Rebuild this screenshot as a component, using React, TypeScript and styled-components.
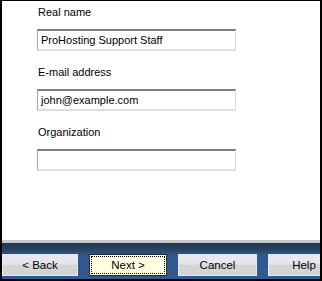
import styled, { createGlobalStyle } from "styled-components";

const fields = [
  { label: "Real name", value: "ProHosting Support Staff" },
  { label: "E-mail address", value: "john@example.com" },
  { label: "Organization", value: "" },
];

const buttons = [
  { label: "< Back", width: 76, focused: false },
  { label: "Next >", width: 78, focused: true },
  { label: "Cancel", width: 79, focused: false },
  { label: "Help", width: 72, focused: false },
];

function App() {
  return (
    <>
      <GlobalStyle />
      <Frame>
        <Content>
          {fields.map((f) => (
            <Field key={f.label}>
              <Label>{f.label}</Label>
              <TextBox>{f.value}</TextBox>
            </Field>
          ))}
        </Content>
        <Footer>
          <Band />
          <ButtonRow>
            {buttons.map((b) => (
              <Button key={b.label} focused={b.focused} w={b.width}>
                {b.focused ? <Focus>{b.label}</Focus> : b.label}
              </Button>
            ))}
          </ButtonRow>
        </Footer>
      </Frame>
    </>
  );
}

export default App;

const GlobalStyle = createGlobalStyle`
  body {
    margin: 0;
    background: #ffffff;
    font-family: "Liberation Sans", Arial, sans-serif;
  }
`;

const Frame = styled.div`
  width: 322px;
  height: 281px;
  box-sizing: border-box;
  border-style: solid;
  border-color: #000000;
  border-width: 1px 2px 2px 2px;
  display: flex;
  flex-direction: column;
  overflow: hidden;
`;

const Content = styled.div`
  flex: 1;
  background: #ffffff;
  padding: 4px 0 0 35px;
  display: flex;
  flex-direction: column;
  gap: 14px;
`;

const Field = styled.div`
  display: flex;
  flex-direction: column;
  gap: 9px;
`;

const Label = styled.div`
  font-size: 11px;
  line-height: 15px;
  color: #000000;
  padding-left: 1px;
`;

const TextBox = styled.div`
  width: 199px;
  height: 22px;
  box-sizing: border-box;
  border-style: solid;
  border-width: 2px 1px 2px 1px;
  border-color: #7d7d80 #dddde0 #dddde0 #a8a8ac;
  padding: 0 3px;
  font-size: 11px;
  line-height: 18px;
  color: #000000;
  background: #ffffff;
`;

const Footer = styled.div`
  height: 36px;
  border-top: 3px solid #c5c9cd;
  background: linear-gradient(#223549 0px, #2a4260 6px, #2e5486 11px, #2f5a90 100%);
  display: flex;
  flex-direction: column;
`;

const Band = styled.div`
  height: 11px;
`;

const ButtonRow = styled.div`
  display: flex;
  gap: 11px;
  height: 22px;
  background: repeating-linear-gradient(
    90deg,
    #2c5389 0px,
    #35609a 1px,
    #2a4f82 2px
  );
`;

const Button = styled.div<{ focused: boolean; w: number }>`
  width: ${(p) => p.w}px;
  flex: none;
  box-sizing: border-box;
  padding: ${(p) => (p.focused ? "1px" : "0")};
  border: 1px solid ${(p) => (p.focused ? "#2a2a2a" : "#e8e8ee")};
  background: ${(p) =>
    p.focused
      ? "#ffffe1"
      : "linear-gradient(#e9e7ef 0%, #e6e4ec 45%, #d5d5d7 50%, #d4d4d6 100%)"};
  display: flex;
  align-items: center;
  justify-content: center;
  font-size: 11.5px;
  color: #000000;
`;

const Focus = styled.div`
  flex: 1;
  align-self: stretch;
  border: 1px dotted #000000;
  display: flex;
  align-items: center;
  justify-content: center;
`;
